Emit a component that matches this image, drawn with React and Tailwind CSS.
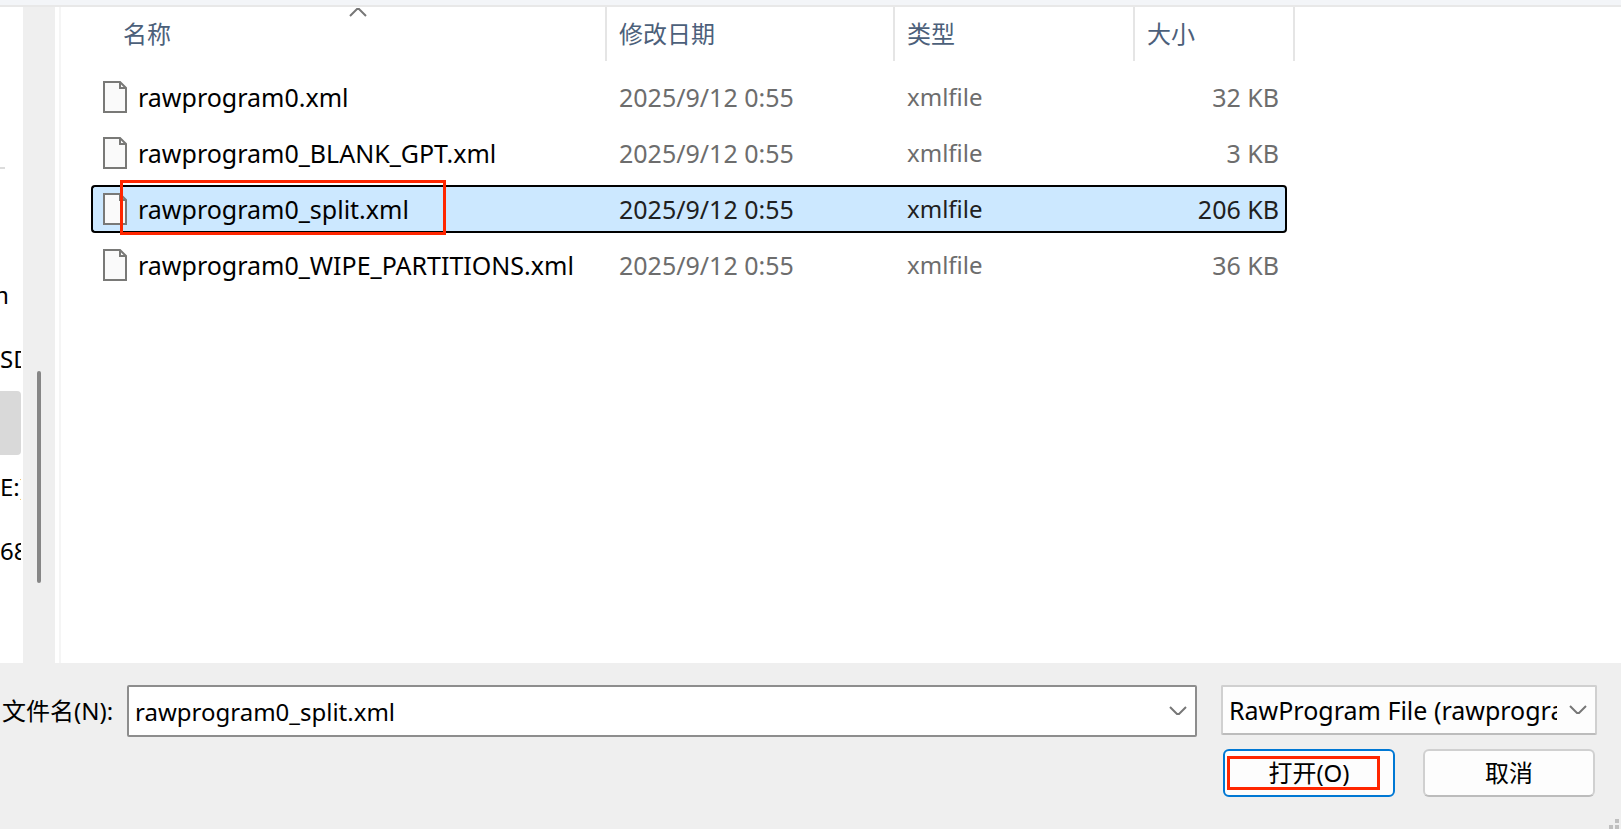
import React, { useState } from 'react';

const files = [
  { name: 'rawprogram0.xml', date: '2025/9/12 0:55', type: 'xmlfile', size: '32 KB' },
  { name: 'rawprogram0_BLANK_GPT.xml', date: '2025/9/12 0:55', type: 'xmlfile', size: '3 KB' },
  { name: 'rawprogram0_split.xml', date: '2025/9/12 0:55', type: 'xmlfile', size: '206 KB' },
  { name: 'rawprogram0_WIPE_PARTITIONS.xml', date: '2025/9/12 0:55', type: 'xmlfile', size: '36 KB' },
];

const FileIcon = () => (
  <svg className="shrink-0" width="24" height="32" viewBox="0 0 24 32" fill="none">
    <path d="M1 1H17L23 7V31H1Z" fill="#fafafa" stroke="#797977" strokeWidth="2" />
    <path d="M17 1V7H23" stroke="#797977" strokeWidth="2" />
  </svg>
);

const Chevron = ({ className = '' }) => (
  <svg className={className} width="18" height="10" viewBox="0 0 18 10" fill="none">
    <path d="M1 1L8 8H10L17 1" stroke="#777777" strokeWidth="2" />
  </svg>
);

const Sidebar = () => {
  return (
    <aside className="flex w-[55px] shrink-0 bg-[#efefef]">
      <div className="w-[23px] overflow-hidden bg-white pt-[160px] pr-0.5">
        <hr className="mb-[94px] w-[5px] border-t-2 border-[#dcdcdc]" />
        <ul className="overflow-hidden whitespace-nowrap text-black">
          <li className="flex h-16 w-[9px] items-center justify-end">m</li>
          <li className="flex h-16 items-center">SD</li>
          <li className="h-16 rounded-r-sm bg-[#d9d9d9]"></li>
          <li className="flex h-16 items-center">E:)</li>
          <li className="flex h-16 items-center">68</li>
        </ul>
      </div>
      {/* Scrollbar */}
      <div className="ml-3.5 mt-[364px] h-[212px] w-1 rounded-xs bg-[#868686]"></div>
    </aside>
  );
};

const FileTable = ({ selected, onSelect }) => {
  return (
    <table className="w-[1204px] table-fixed border-separate border-spacing-0 text-left">
      <colgroup>
        <col className="w-[516px]" />
        <col className="w-[288px]" />
        <col className="w-[240px]" />
        <col className="w-[160px]" />
      </colgroup>
      <thead className="text-[#4c607a]">
        <tr className="h-[62px] align-top">
          <th className="p-0 font-normal">
            <div className="relative ml-5 flex h-[54px] items-center border-r-2 border-[#e5e5e5] pl-3">
              <Chevron className="absolute left-1/2 top-0 -translate-x-1/2 rotate-180" />
              名称
            </div>
          </th>
          <th className="p-0 font-normal">
            <div className="flex h-[54px] items-center border-r-2 border-[#e5e5e5] pl-3">修改日期</div>
          </th>
          <th className="p-0 font-normal">
            <div className="flex h-[54px] items-center border-r-2 border-[#e5e5e5] pl-3">类型</div>
          </th>
          <th className="p-0 font-normal">
            <div className="flex h-[54px] items-center border-r-2 border-[#e5e5e5] pl-3">大小</div>
          </th>
        </tr>
      </thead>
      <tbody>
        {files.map((file) => {
          const active = file.name === selected;
          const cell = active
            ? 'border-black bg-[#cce8ff] text-[#202020]'
            : 'border-transparent text-[#6d6d6d]';
          return (
            <tr key={file.name} className="h-14 text-[25px]" onClick={() => onSelect(file.name)}>
              <td className="p-0">
                <div className={`relative flex h-12 items-center gap-[11px] rounded-l-sm border-y-2 border-l-2 pl-2.5 ${cell}`}>
                  <FileIcon />
                  <span className="text-black">{file.name}</span>
                  {active && (
                    <div className="absolute -top-[7px] left-[27px] h-[55px] w-[326px] border-3 border-[#ff2600]"></div>
                  )}
                </div>
              </td>
              <td className="p-0">
                <div className={`flex h-12 items-center border-y-2 pl-3 ${cell}`}>{file.date}</div>
              </td>
              <td className="p-0 text-[24px]">
                <div className={`flex h-12 items-center border-y-2 pl-3 ${cell}`}>{file.type}</div>
              </td>
              <td className="p-0">
                <div className={`mr-2 flex h-12 items-center justify-end rounded-r-sm border-y-2 border-r-2 pr-1.5 ${cell}`}>
                  {file.size}
                </div>
              </td>
            </tr>
          );
        })}
      </tbody>
    </table>
  );
};

const Footer = ({ fileName, onChange }) => {
  return (
    <form
      className="relative h-[166px] shrink-0 bg-[#efefef] pt-[22px] pr-6 pl-0.5 text-black"
      onSubmit={(e) => e.preventDefault()}
    >
      <div className="flex items-start">
        <label htmlFor="file-name" className="flex h-[52px] w-[125px] shrink-0 items-center whitespace-nowrap">
          文件名(N):
        </label>
        <div className="flex h-[52px] min-w-0 flex-1 items-center rounded-xs border-2 border-[#8d8d8d] bg-white">
          <input
            id="file-name"
            type="text"
            value={fileName}
            onChange={(e) => onChange(e.target.value)}
            className="h-full min-w-0 flex-1 bg-transparent pl-1.5 outline-none"
          />
          <button type="button" aria-label="展开" className="pr-2 pl-2">
            <Chevron />
          </button>
        </div>
        <div className="relative ml-6 w-[376px] shrink-0">
          <select
            aria-label="文件类型"
            className="h-[50px] w-full appearance-none rounded-xs border-2 border-[#d0d0d0] border-b-[#bcbcbc] bg-[#fdfdfd] pr-[38px] pl-1.5 text-[25px]"
          >
            <option>RawProgram File (rawprogram*.xml)</option>
          </select>
          <Chevron className="pointer-events-none absolute top-5 right-2.5" />
        </div>
      </div>

      <div className="mt-3 mr-0.5 flex justify-end gap-7">
        <button type="submit" className="relative h-12 w-[172px] rounded-md border-2 border-[#0078d4] bg-[#fdfdfd]">
          打开(O)
          <div className="absolute top-[5px] left-0.5 h-[34px] w-[153px] border-3 border-[#ff2600]"></div>
        </button>
        <button type="button" className="h-12 w-[172px] rounded-md border-2 border-[#d0d0d0] border-b-[#bcbcbc] bg-[#fdfdfd]">
          取消
        </button>
      </div>

      {/* Resize grip */}
      <svg className="absolute right-0.5 bottom-0" width="10" height="10" viewBox="0 0 10 10" fill="#bfbfbf">
        <rect x="6" y="0" width="4" height="4" />
        <rect x="0" y="6" width="4" height="4" />
        <rect x="6" y="6" width="4" height="4" />
      </svg>
    </form>
  );
};

const App = () => {
  const [selected, setSelected] = useState('rawprogram0_split.xml');

  return (
    <div className="flex min-h-screen flex-col bg-white font-['Noto_Sans','Noto_Sans_CJK_SC',sans-serif] text-[24px] leading-8">
      <div className="h-[7px] shrink-0 border-b-2 border-[#e8e8e8] bg-[#f3f5f8]"></div>
      <div className="flex flex-1">
        <Sidebar />
        <main className="ml-1 min-w-0 flex-1 border-l-2 border-[#f5f5f5] pl-[30px]">
          <FileTable selected={selected} onSelect={setSelected} />
        </main>
      </div>
      <Footer fileName={selected} onChange={setSelected} />
    </div>
  );
};

export default App;
